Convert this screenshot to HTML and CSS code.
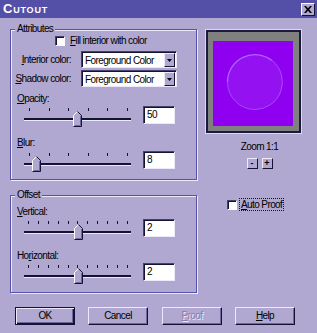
FILE: index.html
```html
<!DOCTYPE html>
<html>
<head>
<meta charset="utf-8">
<title>Cutout</title>
<link rel="stylesheet" href="styles.css">
</head>
<body>
<div class="window">
  <div class="titlebar">
    <span class="title">Cutout</span>
    <span class="close"><svg width="8" height="7" viewBox="0 0 8 7"><path d="M0 0h2l2 2.2L6 0h2L5.2 3.5 8 7H6L4 4.8 2 7H0l2.8-3.5z" fill="#000"/></svg></span>
  </div>
  <div class="content">
    <div class="main">
      <div class="left">
        <div class="group attributes">
          <span class="legend">Attributes</span>
          <div class="fill-row"><span class="checkbox"></span><span class="check-label"><u>F</u>ill interior with color</span></div>
          <div class="combo-row first">
            <span class="combo-label"><u>I</u>nterior color:</span>
            <div class="combo"><span class="combo-text">Foreground Color</span><span class="combo-btn"><svg width="5" height="3" viewBox="0 0 5 3"><path d="M0 0h5L2.5 3z" fill="#000"/></svg></span></div>
          </div>
          <div class="combo-row">
            <span class="combo-label"><u>S</u>hadow color:</span>
            <div class="combo"><span class="combo-text">Foreground Color</span><span class="combo-btn"><svg width="5" height="3" viewBox="0 0 5 3"><path d="M0 0h5L2.5 3z" fill="#000"/></svg></span></div>
          </div>
          <div class="field-label opacity-label"><u>O</u>pacity:</div>
          <div class="slider-row">
            <div class="slider">
              <div class="ticks"><i></i><i></i><i></i><i></i><i></i><i></i></div>
              <div class="track"></div>
              <svg class="thumb" style="left:49px" width="9" height="16" viewBox="0 0 9 16"><path d="M0.5 15.5V4.5L4.5 0.5L8.5 4.5V15.5Z" fill="#b0a8d0"/><path d="M0.5 15V4.5L4.5 0.5" fill="none" stroke="#fff"/><path d="M4.5 0.5L8.5 4.5V15.5H0.5" fill="none" stroke="#141432"/><path d="M7.5 5V14.5H1.5" fill="none" stroke="#6e68a0"/></svg>
            </div>
            <div class="num">50</div>
          </div>
          <div class="field-label blur-label"><u>B</u>lur:</div>
          <div class="slider-row blur-row">
            <div class="slider">
              <div class="ticks"><i></i><i></i><i></i><i></i><i></i><i></i></div>
              <div class="track"></div>
              <svg class="thumb" style="left:8px" width="9" height="16" viewBox="0 0 9 16"><path d="M0.5 15.5V4.5L4.5 0.5L8.5 4.5V15.5Z" fill="#b0a8d0"/><path d="M0.5 15V4.5L4.5 0.5" fill="none" stroke="#fff"/><path d="M4.5 0.5L8.5 4.5V15.5H0.5" fill="none" stroke="#141432"/><path d="M7.5 5V14.5H1.5" fill="none" stroke="#6e68a0"/></svg>
            </div>
            <div class="num">8</div>
          </div>
        </div>
        <div class="group offset">
          <span class="legend">Offset</span>
          <div class="field-label vertical-label"><u>V</u>ertical:</div>
          <div class="slider-row">
            <div class="slider">
              <div class="ticks eleven"><i></i><i></i><i></i><i></i><i></i><i></i><i></i><i></i><i></i><i></i><i></i></div>
              <div class="track"></div>
              <svg class="thumb" style="left:50px" width="9" height="16" viewBox="0 0 9 16"><path d="M0.5 15.5V4.5L4.5 0.5L8.5 4.5V15.5Z" fill="#b0a8d0"/><path d="M0.5 15V4.5L4.5 0.5" fill="none" stroke="#fff"/><path d="M4.5 0.5L8.5 4.5V15.5H0.5" fill="none" stroke="#141432"/><path d="M7.5 5V14.5H1.5" fill="none" stroke="#6e68a0"/></svg>
            </div>
            <div class="num">2</div>
          </div>
          <div class="field-label horizontal-label">Ho<u>r</u>izontal:</div>
          <div class="slider-row">
            <div class="slider">
              <div class="ticks eleven"><i></i><i></i><i></i><i></i><i></i><i></i><i></i><i></i><i></i><i></i><i></i></div>
              <div class="track"></div>
              <svg class="thumb" style="left:50px" width="9" height="16" viewBox="0 0 9 16"><path d="M0.5 15.5V4.5L4.5 0.5L8.5 4.5V15.5Z" fill="#b0a8d0"/><path d="M0.5 15V4.5L4.5 0.5" fill="none" stroke="#fff"/><path d="M4.5 0.5L8.5 4.5V15.5H0.5" fill="none" stroke="#141432"/><path d="M7.5 5V14.5H1.5" fill="none" stroke="#6e68a0"/></svg>
            </div>
            <div class="num">2</div>
          </div>
        </div>
      </div>
      <div class="right">
        <div class="preview">
          <div class="preview-inner">
            <div class="preview-image">
              <svg width="80" height="85" viewBox="0 0 80 85">
                <rect width="80" height="85" fill="#9000f0"/>
                <circle cx="42" cy="41" r="28" fill="#9412f2"/>
                <path d="M14.5 41 A27.5 27.5 0 0 1 59 19.5" fill="none" stroke="#b060ff" stroke-width="1.3"/>
                <path d="M59 19.5 A27.5 27.5 0 0 1 42 68.5 A27.5 27.5 0 0 1 14.5 41" fill="none" stroke="#a448fa" stroke-width="1"/>
              </svg>
            </div>
          </div>
        </div>
        <div class="zoom-area">
          <div class="zoom-label">Zoom 1:1</div>
          <div class="zoom-btns">
            <span class="mini-btn">-</span>
            <span class="mini-btn">+</span>
          </div>
        </div>
        <div class="auto-row"><span class="checkbox"></span><span class="auto-label"><u>A</u>uto Proof</span></div>
      </div>
    </div>
    <div class="btn-row">
      <span class="btn default">OK</span>
      <span class="btn">Cancel</span>
      <span class="btn disabled"><u>P</u>roof</span>
      <span class="btn"><u>H</u>elp</span>
    </div>
  </div>
</div>
</body>
</html>
```

FILE: styles.css
```css
* { box-sizing: border-box; margin: 0; padding: 0; }
html, body { width: 317px; height: 333px; overflow: hidden; }
body {
  font-family: "Liberation Sans", Arial, sans-serif;
  font-size: 10px;
  letter-spacing: -0.6px;
  color: #000;
  background: #b0a8d0;
}
u { text-decoration: underline; text-underline-offset: 1px; }
.window {
  width: 317px;
  height: 333px;
  background: #b0a8d0;
  display: flex;
  flex-direction: column;
}
.titlebar {
  height: 18px;
  flex: none;
  background: #5450a8;
  display: flex;
  align-items: center;
  justify-content: space-between;
  padding: 0 2px 0 3px;
}
.title {
  color: #fff;
  font-weight: bold;
  font-size: 13px;
  font-variant: small-caps;
  line-height: 18px;
  letter-spacing: 0.8px;
}
.close {
  width: 14px;
  height: 13px;
  background: #b0a8d0;
  border: 1px solid;
  border-color: #fff #141432 #141432 #fff;
  display: flex;
  align-items: center;
  justify-content: center;
}
.content {
  padding: 11px 0 0 10px;
  display: flex;
  flex-direction: column;
}
.main { display: flex; }
.left { width: 187px; display: flex; flex-direction: column; }
.group {
  position: relative;
  border: 1px solid #5652a8;
  box-shadow: 1px 1px 0 #ece9fa, inset 1px 1px 0 #ece9fa;
  display: flex;
  flex-direction: column;
}
.legend {
  position: absolute;
  top: -7px;
  left: 4px;
  padding: 0 2px;
  line-height: 12px;
  background: #b0a8d0;
}
.attributes { height: 151px; }
.offset { height: 98px; margin-top: 15px; }
.fill-row {
  margin-top: 5px;
  height: 12px;
  display: flex;
  align-items: center;
  padding-left: 44px;
}
.checkbox {
  width: 10px;
  height: 10px;
  background: #fff;
  border: 1px solid;
  border-color: #46426e #ffffff #ffffff #46426e;
  box-shadow: inset 1px 1px 0 #141432;
  flex: none;
}
.check-label { margin-left: 5px; line-height: 12px; }
.combo-row {
  margin-top: 2px;
  height: 17px;
  display: flex;
  align-items: center;
}
.combo-row.first { margin-top: 4px; }
.combo-label { width: 60px; text-align: right; white-space: nowrap; }
.combo {
  margin-left: 10px;
  width: 96px;
  height: 17px;
  background: #fff;
  border: 1px solid;
  border-color: #46426e #ece9fa #ece9fa #46426e;
  box-shadow: inset 1px 1px 0 #141432;
  display: flex;
  align-items: center;
  padding: 1px 1px 0 3px;
}
.combo-text { flex: 1; white-space: nowrap; line-height: 13px; }
.combo-btn {
  width: 11px;
  height: 14px;
  background: #b0a8d0;
  border: 1px solid;
  border-color: #ece9fa #141432 #141432 #ece9fa;
  display: flex;
  align-items: center;
  justify-content: center;
}
.field-label { height: 11px; line-height: 11px; padding-left: 6px; }
.opacity-label { margin-top: 6px; }
.blur-label { margin-top: 13px; }
.vertical-label { margin-top: 10px; }
.horizontal-label { margin-top: 13px; }
.slider-row {
  margin-top: 1px;
  height: 19px;
  display: flex;
  padding-left: 13px;
}
.blur-row { margin-top: 2px; }
.slider { position: relative; width: 107px; height: 19px; }
.ticks {
  position: absolute;
  top: 3px;
  left: 5px;
  right: 3px;
  height: 3px;
  display: flex;
  justify-content: space-between;
}
.ticks.eleven { left: 4px; }
.ticks i { display: block; width: 1px; height: 3px; background: #141432; }
.track {
  position: absolute;
  top: 13px;
  left: 0;
  right: 0;
  height: 2px;
  background: #141432;
  box-shadow: 0 1px 0 #ece9fa;
}
.thumb { position: absolute; top: 6px; }
.num {
  margin-left: 12px;
  margin-top: 1px;
  width: 32px;
  height: 18px;
  background: #fff;
  border: 1px solid;
  border-color: #46426e #ece9fa #ece9fa #46426e;
  box-shadow: inset 1px 1px 0 #141432;
  line-height: 15px;
  padding-left: 3px;
}
.right { margin-left: 8px; width: 97px; display: flex; flex-direction: column; }
.preview {
  width: 97px;
  height: 105px;
  border: 1px solid #dcd8f0;
}
.preview-inner {
  width: 100%;
  height: 100%;
  border: 2px solid #1c1a3c;
  background: #808080;
  padding: 9px 4px 4px 5px;
}
.preview-image { width: 80px; height: 85px; }
.preview-image svg { display: block; }
.zoom-area {
  margin-left: 12px;
  display: flex;
  flex-direction: column;
  align-items: center;
}
.zoom-label { margin-top: 7px; line-height: 11px; height: 11px; }
.zoom-btns { margin-top: 6px; display: flex; gap: 4px; }
.mini-btn {
  width: 11px;
  height: 11px;
  background: #b0a8d0;
  border: 1px solid;
  border-color: #ece9fa #141432 #141432 #ece9fa;
  font-size: 9px;
  font-weight: bold;
  letter-spacing: 0;
  line-height: 8px;
  text-align: center;
}
.auto-row {
  margin-top: 30px;
  margin-left: 22px;
  display: flex;
  align-items: center;
}
.auto-label {
  margin-left: 3px;
  padding: 0 1px;
  line-height: 11px;
  outline: 1px dotted #141432;
}
.btn-row {
  margin-top: 14px;
  padding-left: 5px;
  display: flex;
  gap: 13px;
}
.btn {
  width: 60px;
  height: 18px;
  background: #b0a8d0;
  border: 1px solid;
  border-color: #ece9fa #141432 #141432 #ece9fa;
  box-shadow: inset -1px -1px 0 #6e68a0;
  text-align: center;
  line-height: 15px;
}
.btn.default {
  border: 1px solid #141432;
  box-shadow: inset 1px 1px 0 #ece9fa, inset -1px -1px 0 #141432, inset -2px -2px 0 #6e68a0;
}
.btn.disabled {
  margin-left: 1px;
  color: #847eb4;
  text-shadow: 1px 1px 0 #ece9fa;
}
```
